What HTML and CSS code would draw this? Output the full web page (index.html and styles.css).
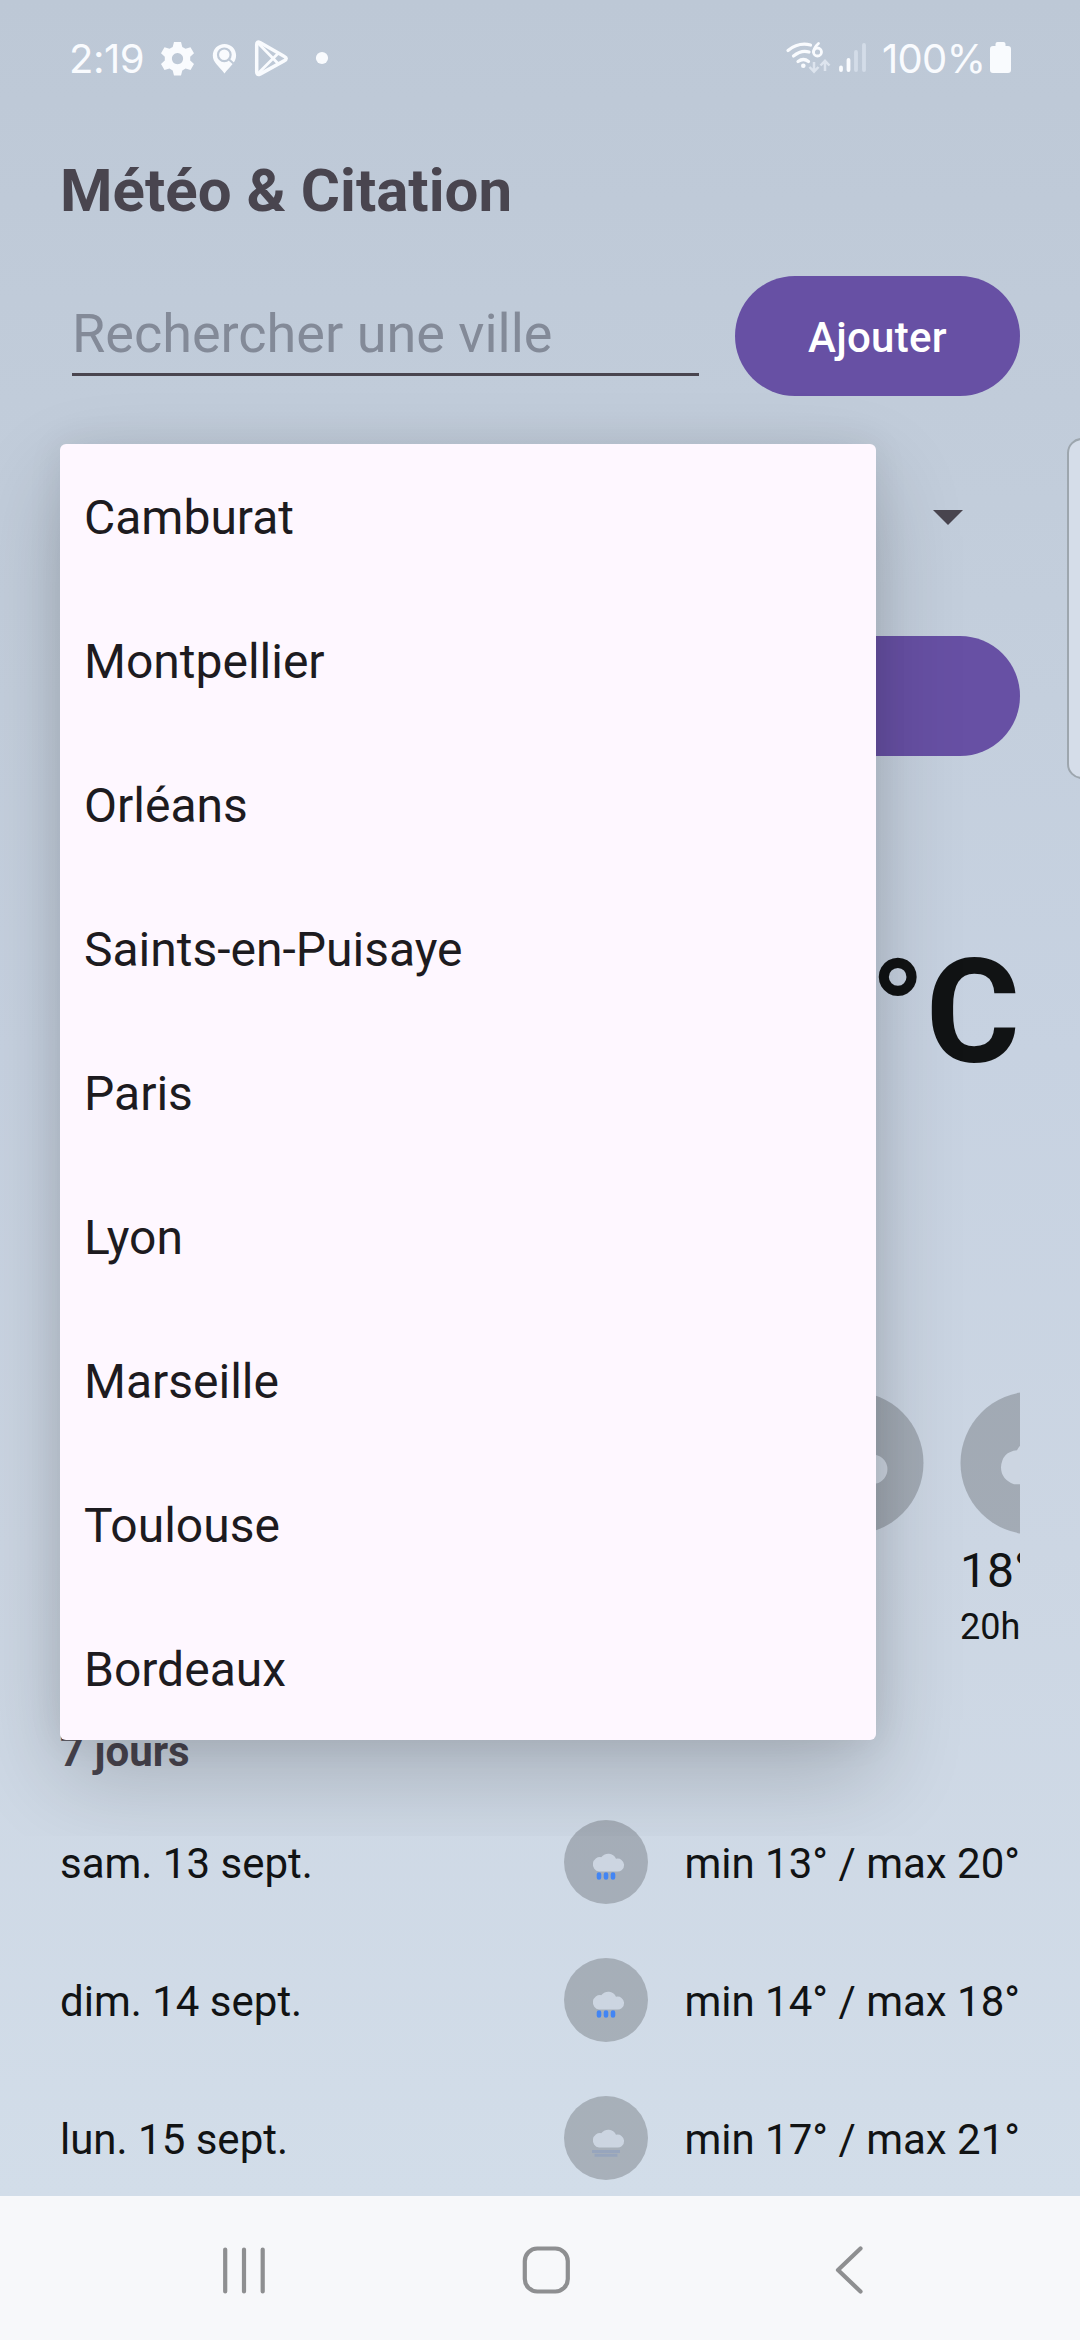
FILE: index.html
```html
<!DOCTYPE html>
<html lang="fr">
<head>
<meta charset="utf-8">
<title>Météo &amp; Citation</title>
<link rel="stylesheet" href="styles.css">
</head>
<body>
<div class="screen">
  <header class="status">
    <span class="clock">2:19</span>
    <svg class="status-left" width="180" height="44" viewBox="155 36 180 44">
      <g fill="#f9fbfe">
        <path fill-rule="evenodd" d="M174 42h7l1.300 5 3.200 1.800 5-1.500 3.500 6-3.800 3.500v3.800l3.800 3.500-3.500 6-5-1.500-3.200 1.800-1.300 5h-7l-1.300-5-3.200-1.800-5 1.500-3.500-6 3.800-3.500v-3.800l-3.800-3.500 3.500-6 5 1.500 3.200-1.800zM177.500 53a5.600 5.600 0 1 0 .01 0z"/>
        <path d="M224.500 44c-6.600 0-11.700 5-11.700 11.500 0 7 6 10.500 11.700 18 5.700-7.500 11.600-11 11.600-18 0-6.500-5-11.500-11.600-11.500z"/>
        <circle cx="322" cy="58" r="6.100"/>
      </g>
      <g fill="none" stroke="#bec9d7" stroke-width="2.200"><circle cx="224.300" cy="54.800" r="6.300"/><path d="M229 59.500l4.500 4"/></g>
      <g fill="none" stroke="#f9fbfe" stroke-linejoin="round">
        <path stroke-width="3.500" d="M256.700 44.500q0-3.500 3.300-2l24 13.800q4.500 2.200 0 4.600l-24 13.200q-3.300 1.400-3.300-2z"/>
        <path stroke-width="2.800" d="M258 43l20.500 21M258 73.500l20.500-20.500"/>
      </g>
    </svg>
    <svg class="status-right" width="85" height="44" viewBox="785 36 85 44">
      <g fill="none" stroke="#f9fbfe" stroke-width="3.200" stroke-linecap="round">
        <path d="M788 50.500q10.500-8.500 22.500-5.500M793.500 56q8-6.500 15.500-4M798 61.500q5.500-4 10.500 0"/>
        <path stroke-width="2.800" d="M818.500 43.500q-4.500 4-5 8.500"/>
        <circle cx="817.500" cy="52" r="4" stroke-width="2.800"/>
      </g>
      <circle cx="803.300" cy="65.800" r="2.300" fill="#f9fbfe"/>
      <g fill="none" stroke="#dde4ee" stroke-width="2.500"><path d="M814 62v9.500M809.500 67l4.500 4.700 4.500-4.700M825 71V61M820.500 65.500l4.500-4.700 4.500 4.700"/></g>
      <g stroke-width="3.800" stroke-linecap="round">
        <path stroke="#f9fbfe" d="M841 67.500v2.500M848.500 60v10"/>
        <path stroke="#d3dce8" d="M856 52v18M864 45v25"/>
      </g>
    </svg>
    <span class="percent">100%</span>
    <svg class="battery" width="21" height="32" viewBox="0 0 21 32"><path fill="#f9fbfe" d="M7.500 0h6q2 0 2 2v2H18q3 0 3 3v21q0 3-3 3H3q-3 0-3-3V7q0-3 3-3h2.500V2q0-2 2-2z"/></svg>
  </header>

  <main class="content">
    <h1 class="title">Météo &amp; Citation</h1>
    <div class="search">
      <div class="field">Rechercher une ville</div>
      <button class="btn">Ajouter</button>
    </div>
    <div class="spinner">
      <span class="arrow"></span>
      <ul class="menu">
        <li>Camburat</li>
        <li>Montpellier</li>
        <li>Orléans</li>
        <li>Saints-en-Puisaye</li>
        <li>Paris</li>
        <li>Lyon</li>
        <li>Marseille</li>
        <li>Toulouse</li>
        <li>Bordeaux</li>
      </ul>
    </div>
    <div class="btn wide"></div>
    <div class="temperature">°C</div>
    <div class="hours">
      <div class="hour">
        <svg class="disc" viewBox="0 0 144 144"><circle class="shade" cx="72" cy="72" r="71.500"/><path class="cloud" d="M48 92.500a15 15 0 0 1 0-30 20 20 0 0 1 38 1.500h10a14.600 14.600 0 0 1 0 28.500z"/></svg>
      </div>
      <div class="hour">
        <svg class="disc" viewBox="0 0 144 144"><circle class="shade" cx="72" cy="72" r="71.500"/><path class="cloud" d="M54 93.300q-13-5-13-17 1-15.500 16-17a21 21 0 0 1 39 4h4a15 15 0 0 1 0 30z"/></svg>
        <span class="hour-temp">18°</span>
        <span class="hour-time">20h</span>
      </div>
    </div>
    <h2 class="subtitle">7 jours</h2>
    <div class="day">
      <span class="date">sam. 13 sept.</span>
      <svg class="icon" viewBox="0 0 84 84"><circle class="shade" cx="42" cy="42" r="42"/><path class="cloud" d="M35 51.500a7.200 7.200 0 1 1 2.200-14.300 8.600 8.600 0 0 1 14.800 1.600 6.500 6.500 0 1 1 .5 12.700z"/><path class="rain" d="M35 54.500v3M42 54.500v3M49 54.500v3"/></svg>
      <span class="range">min 13° / max 20°</span>
    </div>
    <div class="day">
      <span class="date">dim. 14 sept.</span>
      <svg class="icon" viewBox="0 0 84 84"><circle class="shade" cx="42" cy="42" r="42"/><path class="cloud" d="M35 51.500a7.200 7.200 0 1 1 2.200-14.300 8.600 8.600 0 0 1 14.800 1.600 6.500 6.500 0 1 1 .5 12.700z"/><path class="rain" d="M35 54.500v3M42 54.500v3M49 54.500v3"/></svg>
      <span class="range">min 14° / max 18°</span>
    </div>
    <div class="day">
      <span class="date">lun. 15 sept.</span>
      <svg class="icon" viewBox="0 0 84 84"><circle class="shade" cx="42" cy="42" r="42"/><path class="cloud" d="M35 51.500a7.200 7.200 0 1 1 2.200-14.300 8.600 8.600 0 0 1 14.800 1.600 6.500 6.500 0 1 1 .5 12.700z"/><path class="fog" d="M28 55.500h28M30.500 59.300h23"/></svg>
      <span class="range">min 17° / max 21°</span>
    </div>
  </main>

  <div class="edge-panel"></div>

  <nav class="navbar">
    <svg width="1080" height="144" viewBox="0 0 1080 144" fill="none" stroke="#8e8f91" stroke-linecap="round" stroke-linejoin="round">
      <path stroke-width="4.200" d="M225.200 53.500v42M244 53.500v42M262.700 53.500v42"/>
      <rect x="524.800" y="52.500" width="43" height="43" rx="12.500" stroke-width="4.200"/>
      <path stroke-width="4.200" d="M860.500 52.500L838 74l22.500 21.500"/>
    </svg>
  </nav>
</div>
</body>
</html>
```
FILE: styles.css
```css
* { box-sizing: border-box; margin: 0; padding: 0; }
body { font-family: Roboto, "Liberation Sans", sans-serif; color: #111314; }
.screen {
  position: relative;
  width: 1080px;
  height: 2340px;
  overflow: hidden;
  display: flex;
  flex-direction: column;
  background: linear-gradient(#bdc8d6 0, #c4cfdd 700px, #c7d2e1 1050px, #ccd6e3 1550px, #d2dde9 2196px);
}

.status {
  flex: none;
  display: flex;
  align-items: center;
  height: 116px;
  padding: 0 69px;
  color: #f9fbfe;
  font-family: Inter, "Liberation Sans", sans-serif;
  font-size: 40px;
}
.clock { width: 86px; letter-spacing: -0.500px; }
.status-left, .status-right, .battery { flex: none; }
.status-right { margin-left: auto; }
.percent { width: 108px; margin-left: 12px; letter-spacing: -0.700px; }

.content { flex: 1; min-height: 0; padding: 40px 60px 0; }
.title { height: 120px; line-height: 70px; font-size: 60px; font-weight: 700; color: #49454f; }
.search { display: flex; gap: 36px; height: 120px; }
.field {
  flex: 1;
  height: 100px;
  margin-left: 12px;
  padding-top: 26px;
  line-height: 64px;
  font-size: 54px;
  color: #838a98;
  border-bottom: 3px solid #49454f;
}
.btn {
  width: 285px;
  height: 120px;
  border: 0;
  border-radius: 60px;
  background: #6750a4;
  color: #fff;
  font: 500 42px Roboto, sans-serif;
  letter-spacing: 0.300px;
  padding-top: 2px;
}
.btn.wide { width: 100%; }
.spinner {
  position: relative;
  display: flex;
  align-items: center;
  justify-content: flex-end;
  height: 144px;
  margin: 48px 0;
  padding-right: 57px;
}
.arrow { border: 15px solid transparent; border-top-color: #49454f; border-bottom: 0; margin-top: 3px; }
.menu {
  position: absolute;
  z-index: 2;
  left: 0;
  top: 0;
  width: 816px;
  list-style: none;
  border-radius: 6px;
  background: #fef7ff;
  box-shadow: 0 36px 90px rgba(0, 0, 0, .19), 0 0 36px rgba(0, 0, 0, .07);
  clip-path: inset(-96px);
}
.menu li { height: 144px; padding-left: 24px; line-height: 148px; font-size: 48px; color: #1d1b20; }

.temperature { height: 170px; margin-top: 172px; line-height: 170px; text-align: right; font-size: 144px; font-weight: 700; }
.hours { display: flex; gap: 36px; height: 270px; margin-top: 293px; padding-left: 720px; overflow: hidden; }
.hour { flex: none; width: 144px; display: flex; flex-direction: column; }
.disc { flex: none; width: 144px; height: 144px; }
.shade { fill: #000; opacity: .2; }
.cloud { fill: #ccd5e1; }
.hour-temp { margin-top: 7px; line-height: 57px; font-size: 48px; }
.hour-time { line-height: 57px; font-size: 36px; }
.subtitle { height: 50px; margin-top: 66px; line-height: 50px; font-size: 42px; font-weight: 700; color: #49454f; }
.day { display: flex; align-items: center; height: 84px; margin-bottom: 54px; font-size: 42px; }
.subtitle + .day { margin-top: 43px; }
.date { flex: 1; padding-top: 2px; }
.icon { width: 84px; height: 84px; margin-right: 36px; }
.range { width: 336px; padding-top: 2px; text-align: right; white-space: nowrap; }
.rain { fill: none; stroke: #4285f4; stroke-width: 4.600; stroke-linecap: round; }
.fog { fill: none; stroke: #97a5bd; stroke-width: 3; }

.edge-panel {
  position: absolute;
  left: 1067px;
  top: 438px;
  width: 40px;
  height: 341px;
  border: 2px solid #9da6ae;
  border-radius: 15px;
  background: #d5dde9;
}
.navbar { flex: none; height: 144px; background: #f7f8fa; z-index: 1; }
.navbar svg { display: block; }
```
